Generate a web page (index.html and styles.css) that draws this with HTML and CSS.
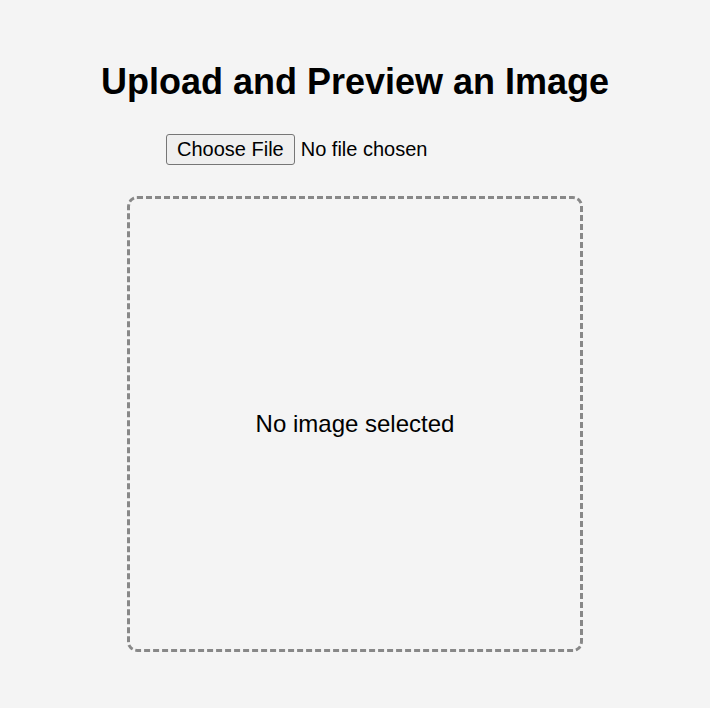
FILE: index.html
```html
<!DOCTYPE html>
<html lang="en">
<head>
    <meta charset="UTF-8">
    <title>Image Preview</title>
    <link rel="stylesheet" href="styles.css">
</head>
<body>
<div class="page">
    <h1 class="title">Upload and Preview an Image</h1>
    <input type="file" class="picker" accept="image/*">
    <div class="preview">
        <span class="empty">No image selected</span>
    </div>
</div>
</body>
</html>
```
FILE: styles.css
```css
*{padding:0;margin:0;box-sizing:border-box;}
body{background:#f4f4f4;font-family:"Liberation Sans",Arial,sans-serif;color:#000;}
.page{display:flex;flex-direction:column;align-items:center;padding-top:61px;}
.title{font-size:36px;font-weight:bold;line-height:41px;}
.picker{display:block;width:378px;height:31px;margin-top:32px;font-family:"Liberation Sans",Arial,sans-serif;font-size:20px;line-height:23px;}
.picker::file-selector-button{font:inherit;height:31px;padding:3px 10px;margin-right:6px;border:1px solid #767676;border-radius:3px;background:#efefef;color:#000;}
.preview{width:456px;height:456px;margin-top:31px;border:3px dashed #888;border-radius:10px;display:flex;align-items:center;justify-content:center;}
.empty{font-size:24px;}
```
